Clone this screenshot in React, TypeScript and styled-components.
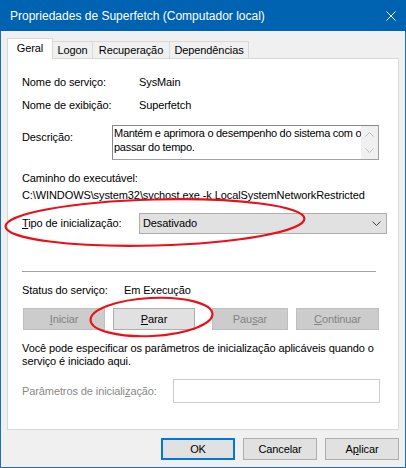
import React from 'react';
import styled, { createGlobalStyle } from 'styled-components';

const Global = createGlobalStyle`
  html, body { margin: 0; padding: 0; background: #f0f0f0; }
  body { font-family: "Liberation Sans", Arial, sans-serif; font-size: 11px; color: #000; letter-spacing: -0.1px; }
  #root { width: 406px; height: 468px; }
  * { box-sizing: border-box; }
`;

const Window = styled.div`
  position: relative;
  width: 406px;
  height: 468px;
  border: 1px solid #1c6dbb;
  border-top: none;
  background: #f0f0f0;
  display: flex;
  flex-direction: column;
`;

const TitleBar = styled.div`
  height: 31px;
  margin: 0 -1px;
  background: #0063b1;
  color: #fff;
  font-size: 12px;
  letter-spacing: 0;
  display: flex;
  align-items: center;
  justify-content: space-between;
  padding: 0 10px 0 10px;
`;

const Content = styled.div`
  padding: 7px 6px 0;
  display: flex;
  flex-direction: column;
`;

const TabStrip = styled.div`
  display: flex;
  align-items: flex-end;
  height: 21px;
  margin-bottom: -1px;
  position: relative;
  z-index: 1;
`;

const Tab = styled.div<{ $w: number; $active?: boolean }>`
  width: ${(p) => p.$w}px;
  height: ${(p) => (p.$active ? 21 : 17)}px;
  margin-bottom: ${(p) => (p.$active ? 0 : 1)}px;
  margin-left: -1px;
  &:first-child { margin-left: 0; }
  background: ${(p) => (p.$active ? '#fff' : '#f0f0f0')};
  border: 1px solid #d9d9d9;
  border-bottom: none;
  display: flex;
  align-items: center;
  justify-content: center;
  padding-bottom: ${(p) => (p.$active ? 2 : 0)}px;
  position: relative;
  z-index: ${(p) => (p.$active ? 2 : 1)};
`;

const Panel = styled.div`
  height: 372px;
  background: #fff;
  border: 1px solid #d9d9d9;
  padding-left: 14px;
  display: flex;
  flex-direction: column;
`;

const Row = styled.div<{ $mt: number; $h?: number; $top?: boolean }>`
  display: flex;
  align-items: ${(p) => (p.$top ? 'flex-start' : 'center')};
  margin-top: ${(p) => p.$mt}px;
  height: ${(p) => p.$h ?? 15}px;
  line-height: 15px;
  white-space: nowrap;
`;

const Label = styled.div<{ $w: number; $pt?: number; $disabled?: boolean }>`
  width: ${(p) => p.$w}px;
  flex: none;
  padding-top: ${(p) => p.$pt ?? 0}px;
  color: ${(p) => (p.$disabled ? '#8a8a8a' : '#000')};
`;

const DescBox = styled.div`
  width: 267px;
  height: 35px;
  border: 1px solid #a0a0a0;
  border-top-color: #828790;
  border-left-color: #828790;
  display: flex;
  background: #fff;
`;

const DescText = styled.div`
  flex: 1;
  padding-left: 1px;
  line-height: 14px;
  letter-spacing: -0.28px;
  overflow: hidden;
`;

const ScrollBar = styled.div`
  width: 17px;
  background: #f0f0f0;
  display: flex;
  flex-direction: column;
`;

const ScrollArrow = styled.div`
  height: 17px;
  display: flex;
  align-items: center;
  justify-content: center;
`;

const Select = styled.div`
  width: 248px;
  height: 21px;
  background: #e1e1e1;
  border: 1px solid #adadad;
  display: flex;
  align-items: center;
  justify-content: space-between;
  padding: 0 5px 0 3px;
`;

const Separator = styled.div`
  margin-top: 37px;
  width: 354px;
  height: 1px;
  background: #a0a0a0;
`;

const ButtonRow = styled.div`
  display: flex;
  margin-top: 10px;
  margin-left: 1px;
  height: 22px;
`;

const Btn = styled.div<{ $w: number; $ml?: number; $disabled?: boolean; $default?: boolean }>`
  width: ${(p) => p.$w}px;
  height: 22px;
  margin-left: ${(p) => p.$ml ?? 0}px;
  flex: none;
  display: flex;
  align-items: center;
  justify-content: center;
  background: ${(p) => (p.$disabled ? '#cccccc' : '#e1e1e1')};
  border: ${(p) => (p.$default ? '2px solid #0078d7' : `1px solid ${p.$disabled ? '#bfbfbf' : '#adadad'}`)};
  color: ${(p) => (p.$disabled ? '#838383' : '#000')};
`;

const Para = styled.div`
  margin-top: 12px;
  line-height: 13px;
  width: 360px;
`;

const Input = styled.div`
  width: 207px;
  height: 24px;
  border: 1px solid #cccccc;
  background: #fff;
`;

const Footer = styled.div`
  display: flex;
  justify-content: flex-end;
  gap: 8px;
  margin-top: 8px;
`;

const U = styled.span`
  text-decoration: underline;
  text-underline-offset: 1px;
`;

const Overlay = styled.svg`
  position: absolute;
  top: 0;
  left: -1px;
  width: 406px;
  height: 468px;
  pointer-events: none;
`;

const Chevron = ({ up, color }: { up?: boolean; color: string }) => (
  <svg width="9" height="5" viewBox="0 0 9 5">
    <polyline
      points={up ? '0.5,4.5 4.5,0.5 8.5,4.5' : '0.5,0.5 4.5,4.5 8.5,0.5'}
      fill="none"
      stroke={color}
      strokeWidth="1"
    />
  </svg>
);

export default function App() {
  return (
    <>
      <Global />
      <Window>
        <TitleBar>
          <span>Propriedades de Superfetch (Computador local)</span>
          <svg width="10" height="10" viewBox="0 0 10 10">
            <path d="M0.5 0.5 L9.5 9.5 M9.5 0.5 L0.5 9.5" stroke="#fff" strokeWidth="1" />
          </svg>
        </TitleBar>
        <Content>
          <TabStrip>
            <Tab $w={46} $active>Geral</Tab>
            <Tab $w={41}>Logon</Tab>
            <Tab $w={78}>Recuperação</Tab>
            <Tab $w={80}>Dependências</Tab>
          </TabStrip>
          <Panel>
            <Row $mt={16}>
              <Label $w={117}>Nome do serviço:</Label>
              <span>SysMain</span>
            </Row>
            <Row $mt={8}>
              <Label $w={117}>Nome de exibição:</Label>
              <span>Superfetch</span>
            </Row>
            <Row $mt={12} $h={35} $top>
              <Label $w={90} $pt={5}>Descrição:</Label>
              <DescBox>
                <DescText>
                  Mantém e aprimora o desempenho do sistema com o
                  <br />
                  passar do tempo.
                </DescText>
                <ScrollBar>
                  <ScrollArrow><Chevron up color="#c2c2c2" /></ScrollArrow>
                  <ScrollArrow><Chevron color="#c2c2c2" /></ScrollArrow>
                </ScrollBar>
              </DescBox>
            </Row>
            <Row $mt={11}>Caminho do executável:</Row>
            <Row $mt={2}>C:\WINDOWS\system32\svchost.exe -k LocalSystemNetworkRestricted</Row>
            <Row $mt={10} $h={21}>
              <Label $w={117}><U>T</U>ipo de inicialização:</Label>
              <Select>
                <span>Desativado</span>
                <Chevron color="#404040" />
              </Select>
            </Row>
            <Separator />
            <Row $mt={11}>
              <Label $w={102}>Status do serviço:</Label>
              <span>Em Execução</span>
            </Row>
            <ButtonRow>
              <Btn $w={82} $disabled><U>I</U>niciar</Btn>
              <Btn $w={82} $ml={8}><U>P</U>arar</Btn>
              <Btn $w={76} $ml={17} $disabled>Pau<U>s</U>ar</Btn>
              <Btn $w={83} $ml={8} $disabled><U>C</U>ontinuar</Btn>
            </ButtonRow>
            <Para>
              Você pode especificar os parâmetros de inicialização aplicáveis quando o serviço é iniciado aqui.
            </Para>
            <Row $mt={11} $h={24}>
              <Label $w={151} $disabled>Parâmetros de iniciali<U>z</U>ação:</Label>
              <Input />
            </Row>
          </Panel>
          <Footer>
            <Btn $w={74} $default>OK</Btn>
            <Btn $w={74}>Cancelar</Btn>
            <Btn $w={74}>A<U>p</U>licar</Btn>
          </Footer>
        </Content>
        <Overlay viewBox="0 0 406 468">
          <ellipse cx="155" cy="222.5" rx="149.5" ry="23" transform="rotate(-1.5 155 222.5)" fill="none" stroke="#e8101a" strokeWidth="2.2" />
          <ellipse cx="151.5" cy="317" rx="61" ry="19" transform="rotate(-3 151.5 317)" fill="none" stroke="#e8101a" strokeWidth="2.2" />
        </Overlay>
      </Window>
    </>
  );
}
